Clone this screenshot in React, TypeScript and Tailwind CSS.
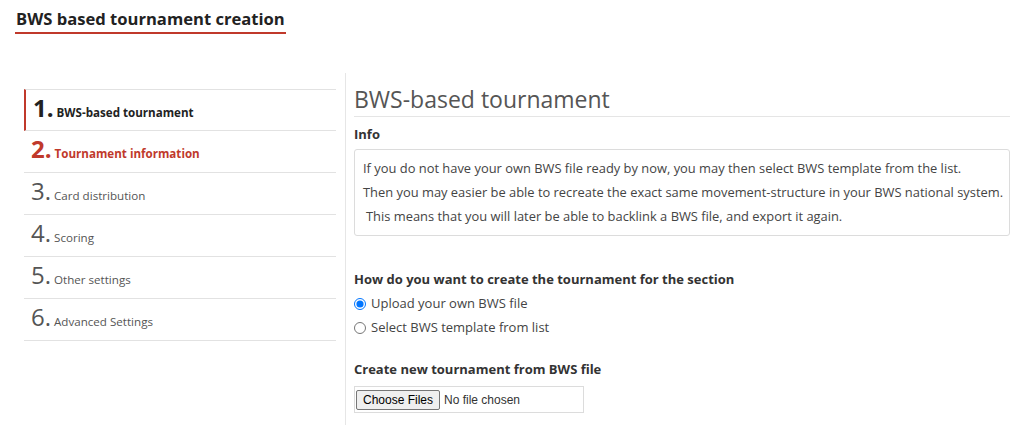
import React from "react";

const steps = [
  { n: "1.", label: "BWS-based tournament", state: "active" },
  { n: "2.", label: "Tournament information", state: "next" },
  { n: "3.", label: "Card distribution", state: "" },
  { n: "4.", label: "Scoring", state: "" },
  { n: "5.", label: "Other settings", state: "" },
  { n: "6.", label: "Advanced Settings", state: "" },
];

export default function App() {
  return (
    <div className="w-[1030px] h-[425px] overflow-hidden bg-white font-['Open_Sans',sans-serif] text-[#444]">
      <div className="pl-[15px] pt-[7px]">
        <h1 className="inline-block border-b-2 border-[#c0392b] px-[1px] pb-[2px] text-[16.6px] font-bold leading-[22px] text-[#222]">
          BWS based tournament creation
        </h1>
      </div>
      <div className="mt-[39px] flex h-[400px]">
        <div className="ml-[24px] mt-[16px] w-[312px]">
          {steps.map((s) => {
            const active = s.state === "active";
            const next = s.state === "next";
            return (
              <div
                key={s.n}
                className={
                  active
                    ? "flex h-[42px] items-baseline border-y border-l-2 border-y-[#e2e2e2] border-l-[#c0392b] pl-[7px] pt-[6px]"
                    : "flex h-[42px] items-baseline border-b border-[#e2e2e2] pl-[7px] pt-[6px]"
                }
              >
                <span
                  className={
                    active
                      ? "text-[24px] font-bold leading-[24px] text-[#222]"
                      : next
                      ? "text-[24px] font-bold leading-[24px] text-[#c0392b]"
                      : "text-[24px] leading-[24px] text-[#555]"
                  }
                >
                  {s.n}
                </span>
                <span
                  className={
                    active
                      ? "ml-[3px] text-[11.6px] font-bold text-[#222]"
                      : next
                      ? "ml-[3px] text-[11.6px] font-bold text-[#c0392b]"
                      : "ml-[3px] text-[11.6px] text-[#555]"
                  }
                >
                  {s.label}
                </span>
              </div>
            );
          })}
        </div>
        <div className="ml-[9px] w-px bg-[#e6e6e6]" />
        <div className="ml-[8px] w-[656px]">
          <h2 className="mt-[10px] border-b border-[#e5e5e5] pb-[1px] text-[23px] font-normal leading-[32px] text-[#555]">
            BWS-based tournament
          </h2>
          <div className="mt-[7px] text-[13px] font-bold leading-[20px] text-[#333]">Info</div>
          <div className="mt-[5px] rounded-[3px] border border-[#dcdcdc] pb-[7px] pl-[8px] pt-[6px] text-[12.9px] leading-[24px] text-[#444]">
            <div>If you do not have your own BWS file ready by now, you may then select BWS template from the list.</div>
            <div>Then you may easier be able to recreate the exact same movement-structure in your BWS national system.</div>
            <div className="pl-[3px]">This means that you will later be able to backlink a BWS file, and export it again.</div>
          </div>
          <div className="mt-[31px] text-[13px] font-bold leading-[24px] text-[#333]">
            How do you want to create the tournament for the section
          </div>
          <label className="mt-[1px] flex h-[24px] items-center text-[13px] text-[#444]">
            <input type="radio" name="mode" defaultChecked className="m-0 h-[12px] w-[12px]" />
            <span className="ml-[5px]">Upload your own BWS file</span>
          </label>
          <label className="flex h-[24px] items-center text-[13px] text-[#444]">
            <input type="radio" name="mode" className="m-0 h-[12px] w-[12px]" />
            <span className="ml-[5px]">Select BWS template from list</span>
          </label>
          <div className="mt-[17px] text-[13px] font-bold leading-[24px] text-[#333]">
            Create new tournament from BWS file
          </div>
          <div className="mt-[5px] flex h-[27px] w-[230px] items-center border border-[#dcdcdc] pl-[1px] font-['Liberation_Sans',Arial,sans-serif] text-[12px] text-[#333]">
            <span className="flex h-[20px] w-[84px] items-center justify-center rounded-[2px] border border-[#767676] bg-[#efefef] text-[#000]">
              Choose Files
            </span>
            <span className="ml-[4px]">No file chosen</span>
          </div>
        </div>
      </div>
    </div>
  );
}
